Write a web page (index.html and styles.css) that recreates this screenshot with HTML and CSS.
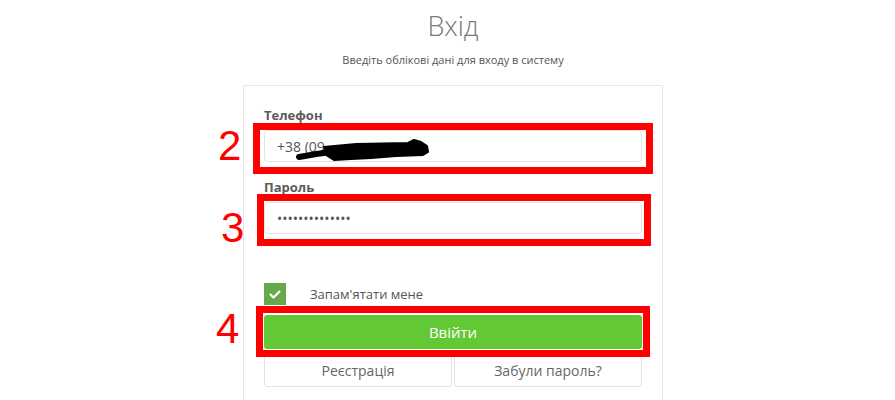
FILE: index.html
```html
<!DOCTYPE html>
<html lang="uk">
<head>
<meta charset="utf-8">
<title>Вхід</title>
<link rel="stylesheet" href="styles.css">
</head>
<body>
<div class="page">
  <div class="wrap">
    <h1 class="title">Вхід</h1>
    <p class="subtitle">Введіть облікові дані для входу в систему</p>
    <div class="card">
      <label class="label">Телефон</label>
      <div class="field">
        <input class="input" type="text" value="+38 (09">
        <svg class="scribble" width="134" height="26" viewBox="0 0 134 26">
          <path d="M3,19 C14,17 26,15 42,13" stroke="#000" stroke-width="6" stroke-linecap="round" fill="none"/>
          <path d="M28,9 L60,6 L112,5 L118,2 L125,4 L131,8 L132,14 L127,17 L100,18 L75,20 L55,21 L38,22 L30,17 Z" fill="#000" stroke="#000" stroke-width="2" stroke-linejoin="round"/>
        </svg>
        <div class="mark mark-2"></div>
        <span class="num num-2">2</span>
      </div>
      <label class="label label-gap">Пароль</label>
      <div class="field">
        <input class="input" type="password" value="12345678901234">
        <div class="mark mark-3"></div>
        <span class="num num-3">3</span>
      </div>
      <div class="remember">
        <span class="check">
          <svg width="22" height="22" viewBox="0 0 22 22"><polyline points="6.5,11.5 9.5,14.5 15.5,8.5" fill="none" stroke="#fff" stroke-width="2.2" stroke-linecap="round" stroke-linejoin="round"/></svg>
        </span>
        <span class="remember-text">Запам'ятати мене</span>
      </div>
      <div class="field">
        <button class="btn-login" type="button">Ввійти</button>
        <div class="mark mark-4"></div>
        <span class="num num-4">4</span>
      </div>
      <div class="links">
        <button class="btn-link" type="button">Реєстрація</button>
        <button class="btn-link" type="button">Забули пароль?</button>
      </div>
    </div>
  </div>
</div>
</body>
</html>
```

FILE: styles.css
```css
* { box-sizing: border-box; }
html, body { margin: 0; padding: 0; background: #fff; }
body { font-family: "Open Sans", "Noto Sans", sans-serif; color: #555; overflow: hidden; }
.page { padding-left: 11px; }
.wrap { width: 420px; margin: 0 auto; }
.title {
  margin: 7px 0 0;
  font-size: 27px;
  font-weight: 300;
  line-height: 38px;
  color: #7a7a7a;
  text-align: center;
}
.subtitle {
  margin: 7px 0 0;
  font-size: 11px;
  line-height: 16px;
  color: #555;
  text-align: center;
}
.card {
  margin-top: 17px;
  border: 1px solid #e6e6e6;
  border-bottom: none;
  padding: 20px 20px 40px;
  height: 330px;
}
.label {
  display: block;
  font-size: 13px;
  font-weight: 700;
  line-height: 18px;
  color: #5b5b5b;
  margin-bottom: 6px;
}
.label-gap { margin-top: 16px; }
.field { position: relative; }
.input {
  display: block;
  width: 100%;
  height: 32px;
  border: 1px solid #e3e3e3;
  border-radius: 4px;
  padding: 0 12px;
  font-family: "Open Sans", sans-serif;
  font-size: 14px;
  color: #555;
  background: #fff;
  outline: none;
}
.scribble { position: absolute; left: 32px; top: 8px; }
.mark { position: absolute; border: 7px solid #ff0000; pointer-events: none; }
.mark-2 { top: -7px; left: -11px; right: -11px; bottom: -12px; }
.mark-3 { top: -8px; left: -7px; right: -9px; bottom: -12px; }
.mark-4 { top: -9px; left: -8px; right: -8px; bottom: -8px; }
.num {
  position: absolute;
  font-family: "Liberation Sans", Arial, sans-serif;
  font-size: 42px;
  line-height: 42px;
  color: #ff0000;
}
.num-2 { left: -46px; top: -5px; }
.num-3 { left: -43px; top: 5px; }
.num-4 { left: -48px; top: -7px; }
.remember {
  display: flex;
  align-items: center;
  gap: 24px;
  margin-top: 49px;
  margin-bottom: 10px;
  height: 22px;
}
.check {
  width: 22px;
  height: 22px;
  background: #68a84c;
  display: flex;
}
.remember-text { font-size: 13px; color: #555; }
.btn-login {
  display: block;
  width: 100%;
  height: 34px;
  border: none;
  border-radius: 3px;
  background: #62c934;
  color: #fff;
  font-family: "Open Sans", sans-serif;
  font-size: 15px;
  font-weight: 400;
}
.links {
  display: flex;
  gap: 2px;
  margin-top: 4px;
}
.btn-link {
  flex: 1;
  height: 34px;
  border: 1px solid #e3e3e3;
  border-radius: 3px;
  background: #fff;
  color: #666;
  font-family: "Open Sans", sans-serif;
  font-size: 14px;
}
```
